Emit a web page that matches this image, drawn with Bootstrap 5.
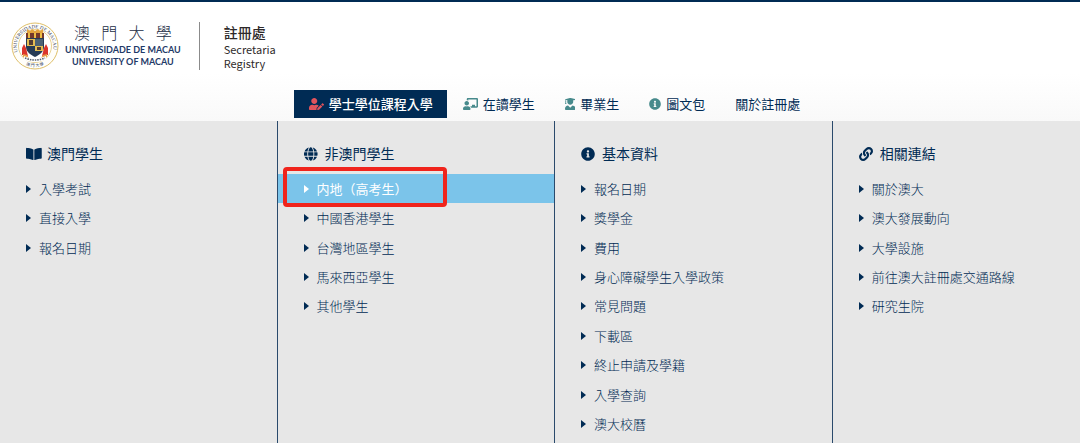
<!DOCTYPE html>
<html lang="zh-Hant">
<head>
<meta charset="utf-8">
<meta name="viewport" content="width=device-width, initial-scale=1">
<title>澳門大學 註冊處</title>
<link href="https://cdn.jsdelivr.net/npm/bootstrap@5.3.0/dist/css/bootstrap.min.css" rel="stylesheet">
<style>
:root { --navy: #002b54; --teal: #478a8c; --panel: #e7e7e7; --sky: #7bc4ea; }
body { font-family: "Noto Sans CJK TC", sans-serif; color: var(--navy); background: var(--panel); overflow-x: hidden; }
a { color: inherit; text-decoration: none; }
.site-head { border-top: 2px solid var(--navy); background: linear-gradient(#fff 60%, #f9f9f9); }
.brand-row { height: 88px; padding-left: 11px; }
.seal { width: 48px; height: 48px; }
.uni-name { font-family: Lato, sans-serif; font-weight: 700; font-size: 9px; line-height: 12px; color: #1f3a68; padding-left: 6px; }
.uni-zh { font-family: "Noto Sans CJK TC", sans-serif; font-weight: 300; font-size: 16px; line-height: 24px; margin-top: -4px; color: #222c44; }
.office { border-left: 1px solid #8b8b8b; font-size: 11px; line-height: 14px; color: #2e2a2a; padding-left: 24px; margin-left: 18px; }
.office-zh { font-size: 14px; line-height: 20px; font-weight: 500; }
.main-nav { padding: 0 0 3px 27.2%; }
.main-nav a { font-size: 13px; line-height: 28px; height: 28px; padding: 0 15px; color: var(--navy); }
.main-nav a.active { background: var(--navy); color: #fff; padding-right: 14px; margin-right: 1px; font-weight: 500; }
.main-nav svg { height: 12px; margin-right: 5px; fill: var(--teal); }
.main-nav a.active svg { fill: #e2545c; }
.mega-col { flex: 0 0 25.7%; border-right: 1px solid #2a4a6c; min-height: 322px; padding-top: 22px; }
.mega-col:last-child { flex: 1 1 0; border-right: 0; }
.mega-title { font-size: 14px; line-height: 21px; font-weight: 400; padding-left: 26px; margin-bottom: 10px; }
.mega-title svg { height: 14px; width: 16px; margin-right: 5px; fill: var(--navy); }
.mega-list { display: grid; grid-template-rows: repeat(9, 1fr); min-height: 265px; margin: 0; }
.mega-list a { display: flex; align-items: center; height: 100%; padding-left: 26px; font-size: 13px; line-height: 20px; font-weight: 300; position: relative; }
.mega-list a::before { content: ""; border: 4px solid transparent; border-left: 5px solid var(--navy); border-right: 0; margin-right: 8px; }
.mega-list a.active { background: var(--sky); color: #fff; font-weight: 400; }
.mega-list a.active::before { border-left-color: #fff; }
.callout-box { position: absolute; left: 5px; top: -7px; bottom: -4px; width: 164px; border: 4px solid #f0241c; border-radius: 4px; pointer-events: none; }
</style>
</head>
<body>
<header class="site-head">
  <div class="brand-row d-flex align-items-center">
    <a href="#" class="d-flex align-items-center">
      <svg class="seal" viewBox="0 0 48 48" role="img" aria-label="University of Macau">
        <circle cx="24" cy="24" r="23" fill="#fffefa" stroke="#dfc069" stroke-width="1"/>
        <circle cx="24" cy="24" r="16.5" fill="#fff" stroke="#e3c777" stroke-width=".8"/>
        <path id="arcTop" d="M6.5 30A18.3 18.3 0 1 1 41.5 30" fill="none"/>
        <path id="arcBottom" d="M10.5 40A21 21 0 0 0 37.5 40" fill="none"/>
        <g font-family="Liberation Serif, serif" fill="#33415f">
          <text font-size="5"><textPath href="#arcTop" startOffset="0">UNIVERSIDADE DE MACAU</textPath></text>
        </g>
        <text font-size="4" font-family="Noto Sans CJK TC, sans-serif" fill="#33415f" text-anchor="middle"><textPath href="#arcBottom" startOffset="50%">澳 門 大 學</textPath></text>
        <path d="M16 7l3 2 2-2 3 2 3-2 2 2 3-2v6H16z" fill="#e4a43e"/>
        <path d="M15 11h18v5H15z" fill="#75382b"/><path d="M17 11h2v5h-2zm6 0h2v5h-2zm6 0h2v5h-2z" fill="#edbd45"/>
        <path d="M15 16h18v9c0 5-5 8-9 10-4-2-9-5-9-10z" fill="#263b55"/>
        <path d="M16 17h8v7h-8zm8 7h8v5h-8z" fill="#e4bd52"/><path d="M24 17h8v7h-8z" fill="#4d6275"/><path d="M18 18h4v5h-4zm8 7h4v3h-4z" fill="#523b35"/>
        <path d="M13 22l2 4 2 8-6-1 0-7zM35 22l-2 4-2 8 6-1 0-7z" fill="#db352c"/>
        <path d="M12 32l4 1 2 3-6-1zM36 32l-4 1-2 3 6-1z" fill="#e8a048"/>
        <path d="M13 34q11 5 22 0v4q-11 4-22 0z" fill="#fff"/><path d="M14 36q10 4 20 0" fill="none" stroke="#57606f" stroke-width="1.6" stroke-dasharray="1.5 1"/>
      </svg>
      <span class="uni-name d-block text-center"><span class="uni-zh d-block">澳&ensp;&thinsp;門&ensp;&thinsp;大&ensp;&thinsp;學</span>UNIVERSIDADE DE MACAU<br>UNIVERSITY OF MACAU</span>
    </a>
    <a href="#" class="office"><span class="office-zh d-block">註冊處</span>Secretaria<br>Registry</a>
  </div>
  <nav class="main-nav d-flex text-nowrap">
    <a href="#" class="active d-flex align-items-center"><svg viewBox="0 0 640 512"><path d="M224 256c70.7 0 128-57.3 128-128S294.7 0 224 0 96 57.3 96 128s57.3 128 128 128zm89.6 32h-16.7c-22.2 10.2-46.9 16-72.9 16s-50.6-5.8-72.9-16h-16.7C60.2 288 0 348.2 0 422.4V464c0 26.5 21.5 48 48 48h274.9c-2.4-6.8-3.4-14-2.6-21.3l6.8-60.9 1.2-11.1 7.9-7.9 77.3-77.3c-24.5-27.7-60-45.5-99.9-45.5zm45.3 145.3l-6.8 61c-1.1 10.2 7.5 18.8 17.6 17.6l60.9-6.8 137.9-137.9-71.7-71.7-137.9 137.8zM633 268.9L595.1 231c-9.3-9.3-24.5-9.3-33.8 0l-37.8 37.8-4.1 4.1 71.8 71.7 41.8-41.8c9.3-9.4 9.3-24.5 0-33.9z"/></svg>學士學位課程入學</a>
    <a href="#" class="d-flex align-items-center"><svg viewBox="0 0 640 512"><path d="M208 352c-2.39 0-4.78.35-7.06 1.09C187.98 357.3 174.35 360 160 360c-14.35 0-27.98-2.7-40.95-6.91-2.28-.74-4.66-1.09-7.05-1.09C49.94 352-.33 402.48 0 464.62.14 490.88 21.73 512 48 512h224c26.27 0 47.86-21.12 48-47.38.33-62.14-49.94-112.62-112-112.62zm-48-32c53.02 0 96-42.98 96-96s-42.98-96-96-96-96 42.98-96 96 42.98 96 96 96zM592 0H208c-26.47 0-48 22.25-48 49.59V96c23.42 0 45.1 6.78 64 17.8V64h352v288h-64v-64H384v64h-76.24c19.1 16.69 33.12 38.73 39.69 64H592c26.47 0 48-22.25 48-49.59V49.59C640 22.25 618.47 0 592 0z"/></svg>在讀學生</a>
    <a href="#" class="d-flex align-items-center"><svg viewBox="0 0 448 512"><path d="M319.4 320.6L224 416l-95.4-95.4C57.1 323.7 0 382.2 0 454.4v9.6c0 26.5 21.5 48 48 48h352c26.5 0 48-21.5 48-48v-9.6c0-72.2-57.1-130.7-128.6-133.8zM13.6 79.8l6.4 1.5v58.4c-7 4.2-12 11.5-12 20.3 0 8.4 4.6 15.4 11.1 19.7L3.5 242c-1.7 6.9 2.1 14 7.6 14h41.8c5.5 0 9.3-7.1 7.6-14l-15.6-62.3C51.4 175.4 56 168.4 56 160c0-8.8-5-16.1-12-20.3V87.1l66 15.9c-8.6 17.2-14 36.4-14 57 0 70.7 57.3 128 128 128s128-57.3 128-128c0-20.6-5.3-39.8-14-57l96.3-23.2c18.2-4.4 18.2-27.1 0-31.5l-190.4-46c-13-3.1-26.7-3.1-39.7 0L13.6 48.2c-18.1 4.4-18.1 27.2 0 31.6z"/></svg>畢業生</a>
    <a href="#" class="d-flex align-items-center"><svg viewBox="0 0 512 512"><path d="M256 8C119.043 8 8 119.083 8 256c0 136.997 111.043 248 248 248s248-111.003 248-248C504 119.083 392.957 8 256 8zm0 110c23.196 0 42 18.804 42 42s-18.804 42-42 42-42-18.804-42-42 18.804-42 42-42zm56 254c0 6.627-5.373 12-12 12h-88c-6.627 0-12-5.373-12-12v-24c0-6.627 5.373-12 12-12h12v-64h-12c-6.627 0-12-5.373-12-12v-24c0-6.627 5.373-12 12-12h64c6.627 0 12 5.373 12 12v100h12c6.627 0 12 5.373 12 12v24z"/></svg>圖文包</a>
    <a href="#">關於註冊處</a>
  </nav>
</header>
<main class="d-flex">
  <section class="mega-col">
    <h2 class="mega-title d-flex align-items-center"><svg viewBox="0 0 576 512" preserveAspectRatio="xMinYMid"><path d="M542.22 32.05c-54.8 3.11-163.72 14.43-230.96 55.59-4.64 2.84-7.27 7.89-7.27 13.17v363.87c0 11.55 12.63 18.85 23.28 13.49 69.18-34.82 169.23-44.32 218.7-46.92 16.89-.89 30.02-14.43 30.02-30.66V62.75c.01-17.71-15.35-31.74-33.77-30.7zM264.73 87.64C197.5 46.48 88.58 35.17 33.78 32.05 15.36 31.01 0 45.04 0 62.75V400.6c0 16.24 13.13 29.78 30.02 30.66 49.49 2.6 149.59 12.11 218.77 46.95 10.62 5.35 23.21-1.94 23.21-13.46V100.63c0-5.29-2.62-10.14-7.27-12.99z"/></svg>澳門學生</h2>
    <ul class="mega-list list-unstyled">
      <li><a href="#">入學考試</a></li>
      <li><a href="#">直接入學</a></li>
      <li><a href="#">報名日期</a></li>
    </ul>
  </section>
  <section class="mega-col">
    <h2 class="mega-title d-flex align-items-center"><svg viewBox="0 0 496 512" preserveAspectRatio="xMinYMid"><path d="M336.5 160C322 70.7 287.8 8 248 8s-74 62.7-88.5 152h177zM152 256c0 22.2 1.2 43.5 3.3 64h185.3c2.1-20.5 3.3-41.8 3.3-64s-1.2-43.5-3.3-64H155.3c-2.1 20.5-3.3 41.8-3.3 64zm324.7-96c-28.6-67.9-86.5-120.4-158-141.6 24.4 33.8 41.2 84.7 50 141.6h108zM177.2 18.4C105.8 39.6 47.8 92.1 19.3 160h108c8.7-56.9 25.5-107.8 49.9-141.6zM487.4 192H372.7c2.1 21 3.3 42.5 3.3 64s-1.2 43-3.3 64h114.6c5.5-20.5 8.6-41.8 8.6-64s-3.1-43.5-8.5-64zM120 256c0-21.5 1.2-43 3.3-64H8.6C3.2 212.5 0 233.8 0 256s3.2 43.5 8.6 64h114.6c-2-21-3.2-42.5-3.2-64zm39.5 96c14.5 89.3 48.7 152 88.5 152s74-62.7 88.5-152h-177zm159.3 141.6c71.4-21.2 129.4-73.7 158-141.6h-108c-8.8 56.9-25.6 107.8-50 141.6zM19.3 352c28.6 67.9 86.5 120.4 158 141.6-24.4-33.8-41.2-84.7-50-141.6h-108z"/></svg>非澳門學生</h2>
    <ul class="mega-list list-unstyled">
      <li><a href="#" class="active">内地（高考生）<span class="callout-box"></span></a></li>
      <li><a href="#">中國香港學生</a></li>
      <li><a href="#">台灣地區學生</a></li>
      <li><a href="#">馬來西亞學生</a></li>
      <li><a href="#">其他學生</a></li>
    </ul>
  </section>
  <section class="mega-col">
    <h2 class="mega-title d-flex align-items-center"><svg viewBox="0 0 512 512" preserveAspectRatio="xMinYMid"><path d="M256 8C119.043 8 8 119.083 8 256c0 136.997 111.043 248 248 248s248-111.003 248-248C504 119.083 392.957 8 256 8zm0 110c23.196 0 42 18.804 42 42s-18.804 42-42 42-42-18.804-42-42 18.804-42 42-42zm56 254c0 6.627-5.373 12-12 12h-88c-6.627 0-12-5.373-12-12v-24c0-6.627 5.373-12 12-12h12v-64h-12c-6.627 0-12-5.373-12-12v-24c0-6.627 5.373-12 12-12h64c6.627 0 12 5.373 12 12v100h12c6.627 0 12 5.373 12 12v24z"/></svg>基本資料</h2>
    <ul class="mega-list list-unstyled">
      <li><a href="#">報名日期</a></li>
      <li><a href="#">獎學金</a></li>
      <li><a href="#">費用</a></li>
      <li><a href="#">身心障礙學生入學政策</a></li>
      <li><a href="#">常見問題</a></li>
      <li><a href="#">下載區</a></li>
      <li><a href="#">終止申請及學籍</a></li>
      <li><a href="#">入學查詢</a></li>
      <li><a href="#">澳大校曆</a></li>
    </ul>
  </section>
  <section class="mega-col">
    <h2 class="mega-title d-flex align-items-center"><svg viewBox="0 0 512 512" preserveAspectRatio="xMinYMid"><path d="M326.612 185.391c59.747 59.809 58.927 155.698.36 214.59-.11.12-.24.25-.36.37l-67.2 67.2c-59.27 59.27-155.699 59.262-214.96 0-59.27-59.26-59.27-155.7 0-214.96l37.106-37.106c9.84-9.84 26.786-3.3 27.294 10.606.648 17.722 3.826 35.527 9.69 52.721 1.986 5.822.567 12.262-3.783 16.612l-13.087 13.087c-28.026 28.026-28.905 73.66-1.155 101.96 28.024 28.579 74.086 28.749 102.325.51l67.2-67.19c28.191-28.191 28.073-73.757 0-101.83-3.701-3.694-7.429-6.564-10.341-8.569a16.037 16.037 0 0 1-6.947-12.606c-.396-10.567 3.348-21.456 11.698-29.806l21.054-21.055c5.521-5.521 14.182-6.199 20.584-1.731a152.482 152.482 0 0 1 20.522 17.197zM467.547 44.449c-59.261-59.262-155.69-59.27-214.96 0l-67.2 67.2c-.12.12-.25.25-.36.37-58.566 58.892-59.387 154.781.36 214.59a152.454 152.454 0 0 0 20.521 17.196c6.402 4.468 15.064 3.789 20.584-1.731l21.054-21.055c8.35-8.35 12.094-19.239 11.698-29.806a16.037 16.037 0 0 0-6.947-12.606c-2.912-2.005-6.64-4.875-10.341-8.569-28.073-28.073-28.191-73.639 0-101.83l67.2-67.19c28.239-28.239 74.3-28.069 102.325.51 27.75 28.3 26.872 73.934-1.155 101.96l-13.087 13.087c-4.35 4.35-5.769 10.79-3.783 16.612 5.864 17.194 9.042 34.999 9.69 52.721.509 13.906 17.454 20.446 27.294 10.606l37.106-37.106c59.271-59.259 59.271-155.699.001-214.959z"/></svg>相關連結</h2>
    <ul class="mega-list list-unstyled">
      <li><a href="#">關於澳大</a></li>
      <li><a href="#">澳大發展動向</a></li>
      <li><a href="#">大學設施</a></li>
      <li><a href="#">前往澳大註冊處交通路線</a></li>
      <li><a href="#">研究生院</a></li>
    </ul>
  </section>
</main>
<script src="https://cdn.jsdelivr.net/npm/bootstrap@5.3.0/dist/js/bootstrap.bundle.min.js"></script>
</body>
</html>
